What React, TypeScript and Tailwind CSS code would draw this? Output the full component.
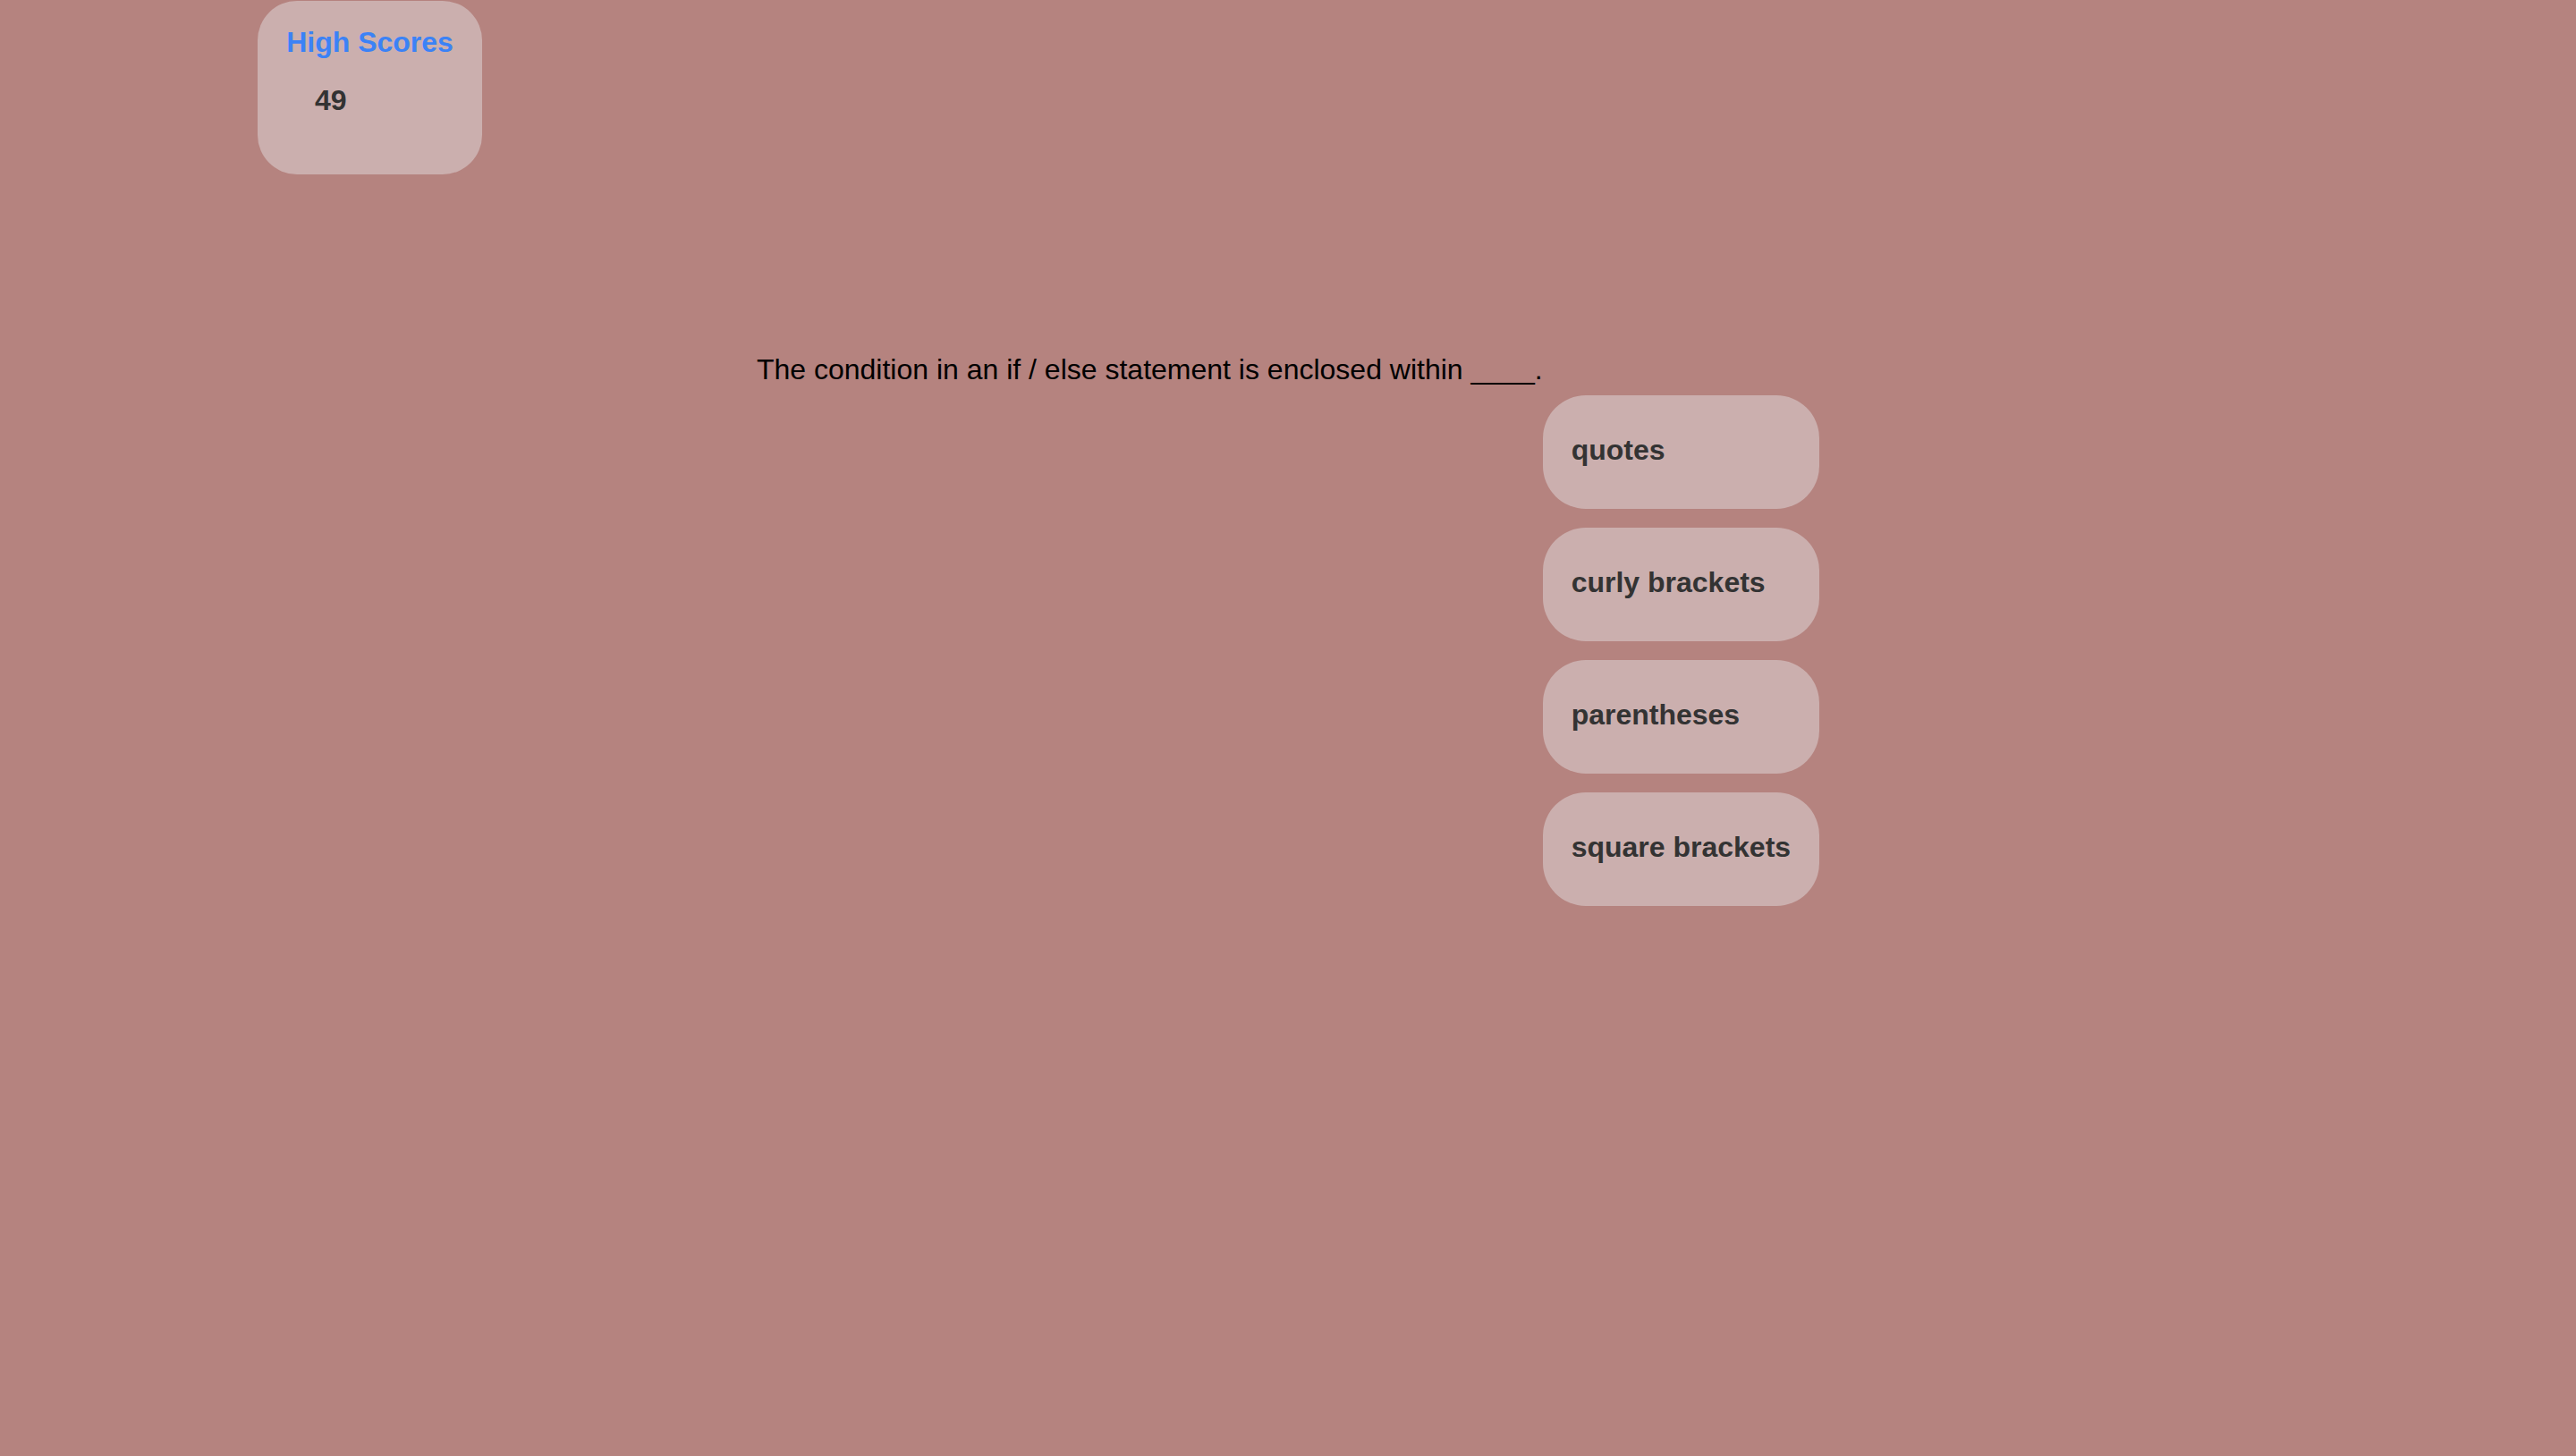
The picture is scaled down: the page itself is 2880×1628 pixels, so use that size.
const answers = ["quotes", "curly brackets", "parentheses", "square brackets"];

export default function App() {
    return (
        <div className="min-h-screen bg-[#b5837f] pt-px font-['Liberation_Sans',Arial,sans-serif]">
            <div className="ml-[288px] h-[194px] w-[251px] rounded-[44px] bg-[#cbafae] pt-[28px]">
                <h2 className="text-center text-[32px] leading-[37px] font-bold text-[#3b82f6]">
                    High Scores
                </h2>
                <p className="mt-[28px] pl-[64px] text-[32px] leading-[37px] font-bold text-[#333333]">
                    49
                </p>
            </div>

            <div className="mt-[200px] flex items-start justify-center">
                <p className="text-[32px] leading-[37px] text-black">
                    The condition in an if / else statement is enclosed within ____.
                </p>
                <div className="mt-[47px] flex flex-col gap-[21px]">
                    {answers.map((answer) => (
                        <button
                            key={answer}
                            className="flex h-[127px] items-center rounded-[48px] bg-[#cbafae] px-[32px] pb-1 text-left text-[32px] leading-[37px] font-bold text-[#333333]"
                        >
                            {answer}
                        </button>
                    ))}
                </div>
            </div>
        </div>
    );
}
